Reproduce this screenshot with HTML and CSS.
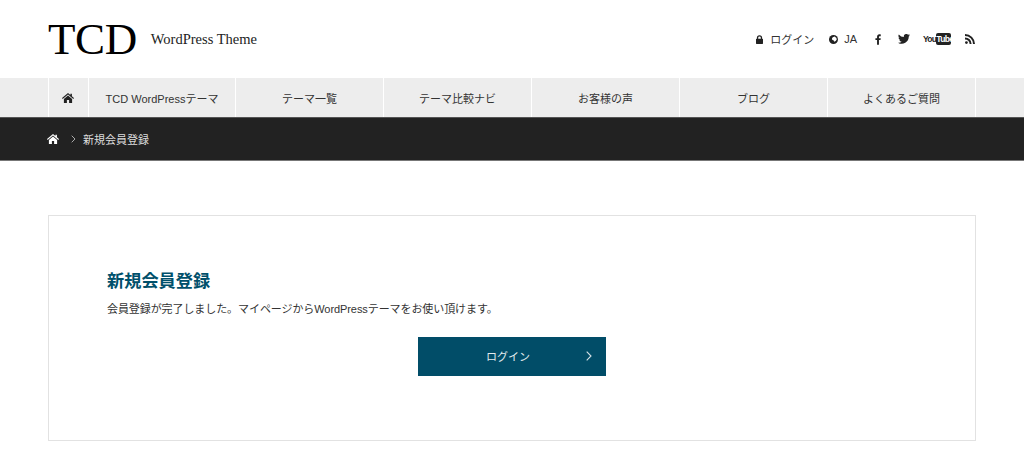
FILE: index.html
```html
<!DOCTYPE html>
<html lang="ja">
<head>
<meta charset="utf-8">
<title>新規会員登録</title>
<link rel="stylesheet" href="styles.css">
</head>
<body>
<header class="header">
  <div class="brand">
    <span class="logo">TCD</span>
    <span class="tagline">WordPress Theme</span>
  </div>
  <ul class="tools">
    <li class="tool tool-login">
      <svg class="ico-lock" viewBox="0 0 8 10"><path d="M1 4.200V3a3 3 0 0 1 6 0v1.200h.4a.6.6 0 0 1 .6.6v4.600a.6.6 0 0 1-.6.6H.6A.6.6 0 0 1 0 9.400V4.800a.6.6 0 0 1 .6-.6zM2.500 4.200h3V3a1.500 1.500 0 0 0-3 0z" fill="#222"/></svg>
      <span>ログイン</span>
    </li>
    <li class="tool tool-lang">
      <svg class="ico-globe" viewBox="0 0 10 10"><circle cx="5" cy="5" r="5" fill="#222"/><path d="M4.200 2.600 6.300 1.800 8.200 3.200 8.600 5 7.400 6.800 5.800 7.500 5.300 6 3.500 5.200 3.300 3.800z" fill="#fff"/></svg>
      <span>JA</span>
    </li>
    <li class="tool tool-fb">
      <svg class="ico-fb" viewBox="0 0 7 12"><path d="M4.600 12V6.600h1.800l.3-2.100H4.600V3.200c0-.6.200-1 1-1h1.100V.1C6.500.1 5.900 0 5.100 0 3.500 0 2.400 1 2.400 2.900v1.600H.5v2.100h1.900V12z" fill="#222"/></svg>
    </li>
    <li class="tool tool-tw">
      <svg class="ico-tw" viewBox="0 0 24 20"><path d="M24 2.400a9.800 9.800 0 0 1-2.800.8A5 5 0 0 0 23.300.5a9.800 9.800 0 0 1-3.100 1.200 4.900 4.900 0 0 0-8.400 4.500A14 14 0 0 1 1.700.9a4.900 4.900 0 0 0 1.500 6.600 4.900 4.900 0 0 1-2.200-.6c0 2.400 1.700 4.400 3.900 4.900a4.900 4.900 0 0 1-2.200.1 4.900 4.900 0 0 0 4.600 3.400A9.900 9.900 0 0 1 0 17.300 14 14 0 0 0 21.500 4.900c1-.7 1.800-1.500 2.500-2.500z" fill="#222"/></svg>
    </li>
    <li class="tool tool-yt">
      <span class="yt-you">You</span><span class="yt-tube">Tube</span>
    </li>
    <li class="tool tool-rss">
      <svg class="ico-rss" viewBox="0 0 10 10"><circle cx="1.400" cy="8.600" r="1.400" fill="#222"/><path d="M0 3.400v2a4.600 4.600 0 0 1 4.600 4.600h2A6.600 6.600 0 0 0 0 3.400zM0 0v2a8 8 0 0 1 8 8h2A10 10 0 0 0 0 0z" fill="#222"/></svg>
    </li>
  </ul>
</header>

<nav class="nav">
  <ul class="nav-list">
    <li class="nav-item nav-home">
      <svg class="ico-home" viewBox="0 0 12 10"><path d="M6 0 0 5.100l.7.8L6 1.500l5.300 4.400.7-.8L9.900 3.300V.7H8.400V2z" fill="#222"/><path d="M6 2.500 1.900 5.900V10h3V7.100h2.200V10h3V5.900z" fill="#222"/></svg>
    </li>
    <li class="nav-item">TCD WordPressテーマ</li>
    <li class="nav-item">テーマ一覧</li>
    <li class="nav-item">テーマ比較ナビ</li>
    <li class="nav-item">お客様の声</li>
    <li class="nav-item">ブログ</li>
    <li class="nav-item">よくあるご質問</li>
  </ul>
</nav>

<div class="crumbs">
  <svg class="ico-home-crumb" viewBox="0 0 12 10"><path d="M6 0 0 5.100l.7.8L6 1.500l5.300 4.400.7-.8L9.900 3.300V.7H8.400V2z" fill="#fff"/><path d="M6 2.500 1.900 5.900V10h3V7.100h2.200V10h3V5.900z" fill="#fff"/></svg>
  <svg class="ico-sep" viewBox="0 0 5 8"><path d="M.7.7 4 4 .7 7.300" fill="none" stroke="#aaa" stroke-width="1"/></svg>
  <span class="crumb-text">新規会員登録</span>
</div>

<main class="main">
  <section class="card">
    <h1 class="title">新規会員登録</h1>
    <p class="message">会員登録が完了しました。マイページからWordPressテーマをお使い頂けます。</p>
    <a class="button">
      <span>ログイン</span>
      <svg class="ico-next" viewBox="0 0 6 10"><path d="M.7.7 5 5 .7 9.300" fill="none" stroke="#d5e0e5" stroke-width="1.100"/></svg>
    </a>
  </section>
</main>
</body>
</html>
```

FILE: styles.css
```css
* { box-sizing: border-box; }
html, body { margin: 0; padding: 0; }
body {
  background: #fff;
  color: #333;
  font-family: "Liberation Sans", "Noto Sans CJK JP", sans-serif;
  font-size: 11px;
  height: 452px;
  overflow: hidden;
}
ul { list-style: none; margin: 0; padding: 0; }

.header {
  height: 78px;
  padding: 0 49px 0 48px;
  display: flex;
  align-items: center;
  justify-content: space-between;
}
.brand { display: flex; align-items: center; }
.logo {
  font-family: "Liberation Serif", serif;
  font-size: 45px;
  line-height: 48px;
  color: #000;
  letter-spacing: -0.4px;
}
.tagline {
  font-family: "Liberation Serif", serif;
  font-size: 14.500px;
  color: #222;
  margin-left: 14px;
}
.tools { display: flex; align-items: center; font-size: 11px; color: #333; }
.tool { display: flex; align-items: center; }
.ico-lock { width: 7px; height: 9px; margin-right: 7px; }
.tool-lang { margin-left: 15px; }
.ico-globe { width: 9px; height: 9px; margin-right: 6px; }
.tool-fb { margin-left: 18px; }
.ico-fb { width: 6px; height: 11px; }
.tool-tw { margin-left: 17px; }
.ico-tw { width: 12px; height: 10px; }
.tool-yt {
  margin-left: 13px;
  width: 28px;
  font-weight: bold;
  font-size: 8.500px;
  line-height: 12px;
  color: #222;
  letter-spacing: -0.7px;
}
.yt-tube {
  background: #222;
  color: #fff;
  border-radius: 2px;
  width: 15px;
  margin-left: auto;
  text-align: center;
}
.tool-rss { margin-left: 14px; }
.ico-rss { width: 10px; height: 10px; display: block; }

.nav {
  height: 40px;
  background: #ededed;
  border-bottom: 1px solid #555;
  padding: 0 48px;
}
.nav-list {
  display: grid;
  grid-template-columns: 40px 147px repeat(5, 148px);
  height: 39px;
  border-left: 1px solid #fff;
  width: 928px;
}
.nav-item {
  border-right: 1px solid #fff;
  display: flex;
  align-items: center;
  justify-content: center;
  color: #333;
  font-size: 11px;
}
.ico-home { width: 12px; height: 10px; margin-right: 2px; }

.crumbs {
  height: 43px;
  background: #222;
  border-bottom: 1px solid #777;
  padding: 0 48px;
  display: flex;
  align-items: center;
  color: #ddd;
  font-size: 11px;
}
.ico-home-crumb { width: 12px; height: 10px; margin-right: 12px; margin-left: -1px; }
.ico-sep { width: 5px; height: 8px; margin-right: 7px; }

.main { padding: 54px 48px 0; }
.card {
  width: 928px;
  height: 226px;
  border: 1px solid #e2e2e2;
  padding: 53px 58px 0;
  display: flex;
  flex-direction: column;
}
.title {
  margin: 0;
  font-size: 17.200px;
  line-height: 24px;
  font-weight: bold;
  color: #00506b;
}
.message {
  margin: 7px 0 0;
  font-size: 11px;
  line-height: 18px;
  letter-spacing: -0.08px;
  color: #333;
}
.button {
  width: 188px;
  height: 39px;
  margin: 19px auto 0;
  position: relative;
  background: #014d68;
  color: #e3ebee;
  font-size: 11px;
  padding: 0 8px 2px 0;
  display: flex;
  align-items: center;
  justify-content: center;
}
.ico-next {
  position: absolute;
  right: 14px;
  top: 14px;
  width: 6px;
  height: 10px;
}
```
